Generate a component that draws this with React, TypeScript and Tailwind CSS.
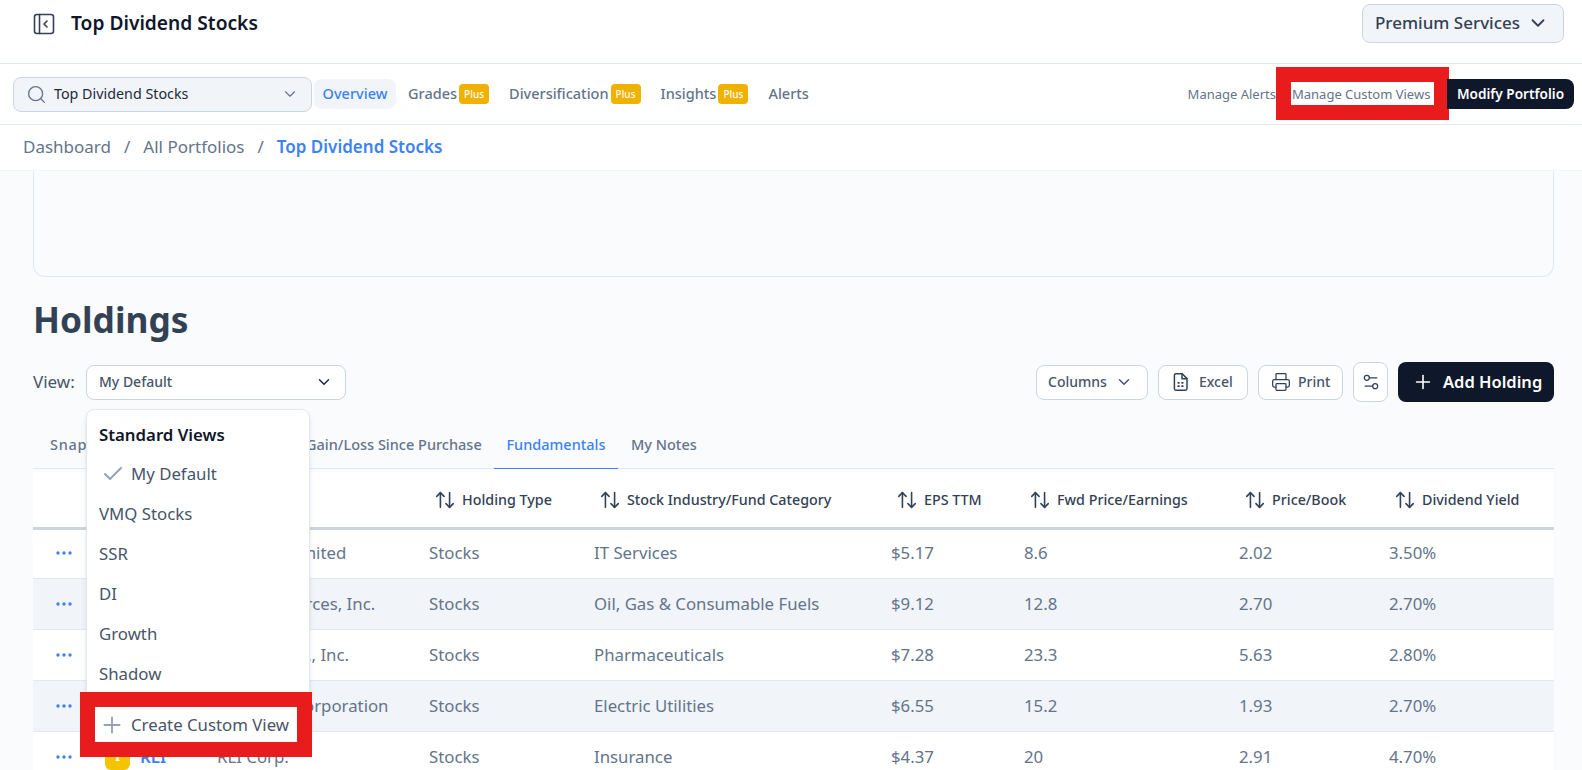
import React from 'react';
import { ArrowUpDown, Check, ChevronDown, Plus, Printer, Search, Settings2 } from 'lucide-react';

const rows = [
  { name: 'Genpact Limited', type: 'Stocks', industry: 'IT Services', eps: '$5.17', pe: '8.6', pb: '2.02', yld: '3.50%' },
  { name: 'Arch Resources, Inc.', type: 'Stocks', industry: 'Oil, Gas & Consumable Fuels', eps: '$9.12', pe: '12.8', pb: '2.70', yld: '2.70%' },
  { name: 'Merck & Co., Inc.', type: 'Stocks', industry: 'Pharmaceuticals', eps: '$7.28', pe: '23.3', pb: '5.63', yld: '2.80%' },
  { name: 'Otter Tail Corporation', type: 'Stocks', industry: 'Electric Utilities', eps: '$6.55', pe: '15.2', pb: '1.93', yld: '2.70%' },
  { name: 'RLI Corp.', ticker: 'RLI', type: 'Stocks', industry: 'Insurance', eps: '$4.37', pe: '20', pb: '2.91', yld: '4.70%' },
];

const columns = ['Holding Type', 'Stock Industry/Fund Category', 'EPS TTM', 'Fwd Price/Earnings', 'Price/Book', 'Dividend Yield'];

const gridCols = 'grid grid-cols-[384px_165px_297px_133px_215px_150px_1fr]';

const PlusBadge = () => (
  <span className="ml-[2px] flex h-[20px] w-[30px] items-center justify-center rounded-[4px] bg-[#f0b100] text-[10px] font-medium text-white">
    Plus
  </span>
);

const SidebarIcon = () => (
  <svg width="22" height="22" viewBox="0 0 22 22" fill="none" stroke="#334155" strokeWidth="1.6" strokeLinecap="round" strokeLinejoin="round">
    <rect x="1.5" y="1.5" width="19" height="19" rx="2.5" />
    <path d="M6.5 1.5v19" />
    <path d="M14 8l-3 3 3 3" />
  </svg>
);

const ExcelIcon = () => (
  <svg width="20" height="20" viewBox="0 0 20 20" fill="none" stroke="#334155" strokeWidth="1.5" strokeLinecap="round" strokeLinejoin="round">
    <path d="M5 1.8h6.2L16 6.6v10a1.6 1.6 0 0 1-1.6 1.6H5a1.6 1.6 0 0 1-1.6-1.6V3.4A1.6 1.6 0 0 1 5 1.8z" />
    <path d="M11 2v4.8h5" />
    <path d="M7.2 10.8h.8M11 10.8h.8M7.2 14.2h.8M11 14.2h.8" strokeWidth="1.7" />
  </svg>
);

const Dots = () => (
  <svg width="16" height="4" viewBox="0 0 16 4" fill="#3b82f6">
    <circle cx="2" cy="2" r="1.7" />
    <circle cx="8" cy="2" r="1.7" />
    <circle cx="14" cy="2" r="1.7" />
  </svg>
);

const ToolButton = ({ children, className }: { children: React.ReactNode; className: string }) => (
  <button className={`flex h-[35px] items-center rounded-lg border border-[#cbd5e1] bg-white text-sm font-medium text-[#475569] ${className}`}>
    {children}
  </button>
);

export default function App() {
  return (
    <div className="h-[770px] overflow-hidden bg-[#f9fbfd] font-['Noto_Sans',sans-serif]">
      {/* Top header */}
      <header className="flex h-[64px] items-start justify-between border-b border-[#e2e8f0] bg-white pl-[33px] pr-[18px] pt-[4px]">
        <div className="flex h-[39px] items-center gap-[16px]">
          <SidebarIcon />
          <h1 className="text-[19.2px] font-semibold text-[#0f172a]">Top Dividend Stocks</h1>
        </div>
        <button className="flex h-[39px] w-[202px] items-center justify-between rounded-lg border border-[#cbd5e1] bg-[#f1f5f9] pb-[2px] pl-[12px] pr-[14px] text-[17px] font-medium text-[#334155]">
          Premium Services
          <ChevronDown size={22} strokeWidth={2} />
        </button>
      </header>

      {/* Portfolio nav */}
      <nav className="flex h-[61px] items-center border-b border-[#e2e8f0] bg-white pl-[13px] pr-[8px] text-[14.5px] font-medium text-[#64748b]">
        <div className="flex h-[35px] w-[299px] items-center rounded-lg border border-[#cbd5e1] bg-[#f1f5f9] pl-[12px] pr-[12px] text-[14.3px] font-normal text-[#1e293b]">
          <Search size={21} strokeWidth={1.5} className="text-[#64748b]" />
          <span className="ml-[7px] flex-1">Top Dividend Stocks</span>
          <ChevronDown size={18} strokeWidth={1.5} className="text-[#64748b]" />
        </div>
        <a className="ml-[2px] flex h-[30px] w-[82px] items-center justify-center rounded-lg bg-[#f1f5f9] text-[#3b82f6]">Overview</a>
        <a className="ml-[12px] flex items-center">Grades<PlusBadge /></a>
        <a className="ml-[20px] flex items-center">Diversification<PlusBadge /></a>
        <a className="ml-[20px] flex items-center">Insights<PlusBadge /></a>
        <a className="ml-[20px]">Alerts</a>
        <div className="ml-auto flex items-center">
          <span className="pt-[2px] text-[13px] font-normal text-[#64748b]">Manage Alerts</span>
          <span className="mb-[1px] ml-[15px] flex h-[23px] w-[143px] items-center bg-white pl-[1px] pt-[2px] text-[13px] font-normal text-[#64748b] outline-[15px] outline-solid outline-[#e81c1c]">
            Manage Custom Views
          </span>
          <button className="ml-[13px] flex h-[30px] w-[127px] items-center justify-center rounded-r-lg bg-[#0f172a] text-[13.6px] font-semibold text-white">
            Modify Portfolio
          </button>
        </div>
      </nav>

      {/* Breadcrumb */}
      <div className="flex h-[46px] items-center gap-[13px] border-b border-[#f1f5f9] bg-white pb-[2px] pl-[23px] text-[17px] text-[#64748b]">
        <span>Dashboard</span>
        <span>/</span>
        <span>All Portfolios</span>
        <span>/</span>
        <span className="font-semibold text-[#3b82f6]">Top Dividend Stocks</span>
      </div>

      <main className="pl-[33px] pr-[28px]">
        <div className="h-[106px] rounded-b-xl border border-t-0 border-[#e2e8f0]" />

        <h2 className="mt-[22px] text-[35.3px] leading-10 font-bold text-[#334155]">Holdings</h2>

        {/* Toolbar */}
        <div className="mt-[23px] flex h-[40px] items-center">
          <span className="w-[53px] text-[17px] text-[#475569]">View:</span>
          <div className="relative">
            <button className="flex h-[35px] w-[260px] items-center justify-between rounded-lg border border-[#cbd5e1] bg-white pl-[12px] pr-[12px] text-sm font-medium text-[#475569]">
              My Default
              <ChevronDown size={18} strokeWidth={2} className="text-[#1e293b]" />
            </button>

            {/* Open view menu */}
            <div className="absolute left-0 top-[44px] z-10 w-[224px] rounded-lg border border-[#e2e8f0] bg-white pb-[3px] pt-[6px] text-[16.8px] text-[#475569] shadow-md">
              <div className="flex h-[38px] items-center pl-[12px] font-semibold text-[#0f172a]">Standard Views</div>
              <div className="flex h-10 items-center pl-[14px]">
                <Check size={24} strokeWidth={2} className="text-[#94a3b8]" />
                <span className="ml-[6px]">My Default</span>
              </div>
              <div className="flex h-10 items-center pl-[12px]">VMQ Stocks</div>
              <div className="flex h-10 items-center pl-[12px]">SSR</div>
              <div className="flex h-10 items-center pl-[12px]">DI</div>
              <div className="flex h-10 items-center pl-[12px]">Growth</div>
              <div className="flex h-10 items-center pl-[12px]">Shadow</div>
              <div className="ml-[8px] mt-[13px] flex h-[35px] w-[202px] items-center bg-white pl-[4px] pt-[2px] outline-[15px] outline-solid outline-[#e81c1c]">
                <Plus size={26} strokeWidth={1.75} className="text-[#94a3b8]" />
                <span className="ml-[6px]">Create Custom View</span>
              </div>
            </div>
          </div>

          <div className="ml-auto flex items-center">
            <ToolButton className="w-[112px] justify-between pl-[11px] pr-[14px]">
              Columns
              <ChevronDown size={18} strokeWidth={2} />
            </ToolButton>
            <ToolButton className="ml-[10px] w-[90px] gap-[8px] pl-[12px]">
              <ExcelIcon />
              Excel
            </ToolButton>
            <ToolButton className="ml-[10px] w-[85px] gap-[7px] pl-[12px]">
              <Printer size={20} strokeWidth={1.5} className="text-[#334155]" />
              Print
            </ToolButton>
            <button className="ml-[10px] flex h-[40px] w-[35px] items-center justify-center rounded-lg border border-[#cbd5e1] bg-white">
              <Settings2 size={20} strokeWidth={1.5} className="text-[#334155]" />
            </button>
            <button className="ml-[10px] flex h-[40px] w-[156px] items-center rounded-lg bg-[#0f172a] pl-[14px] text-[16.5px] font-semibold text-white">
              <Plus size={22} strokeWidth={1.75} />
              <span className="ml-[9px]">Add Holding</span>
            </button>
          </div>
        </div>

        {/* Tabs */}
        <div className="mt-[21px] flex h-[46px] items-stretch border-b border-[#e2e8f0] pb-[1px] text-[14.5px] font-medium text-[#64748b]">
          <span className="ml-[17px] flex w-[256px] items-center tracking-[0.05em]">Snapshot</span>
          <span className="flex w-[188px] items-center">Gain/Loss Since Purchase</span>
          <span className="-mb-[2px] flex w-[124px] items-center justify-center border-b border-[#3b82f6] pb-[2px] text-[#3b82f6]">Fundamentals</span>
          <span className="ml-[13px] flex items-center">My Notes</span>
        </div>

        {/* Holdings table */}
        <div className="mt-[3px] bg-white text-[16.8px] text-[#64748b]">
          <div className={`${gridCols} h-[58px] items-center border-b-[3px] border-[#cbd5e1] text-[14.3px] font-medium text-[#334155]`}>
            <div />
            {columns.map(col => (
              <div key={col} className="flex items-center gap-[6px] pl-[17px]">
                <ArrowUpDown size={22} strokeWidth={1.75} />
                {col}
              </div>
            ))}
          </div>
          {rows.map((row, i) => (
            <div
              key={row.name}
              className={`${gridCols} items-center border-b border-[#e2e8f0] ${i === 0 ? 'h-[49px] pb-[2px]' : 'h-[51px]'} ${i % 2 === 1 ? 'bg-[#f1f5f9]' : ''}`}
            >
              <div className="flex items-center pl-[23px]">
                <Dots />
                <span className="ml-[33px] flex h-[26px] w-[25px] items-center justify-center">
                  {row.ticker && (
                    <span className="flex h-[26px] w-[25px] items-center justify-center rounded-md bg-[#f5c400] text-xs font-bold leading-none text-white">I</span>
                  )}
                </span>
                <span className="ml-[10px] w-[77px] font-semibold text-[#3b82f6]">{row.ticker}</span>
                <span>{row.name}</span>
              </div>
              <div className="pl-3">{row.type}</div>
              <div className="pl-3">{row.industry}</div>
              <div className="pl-3">{row.eps}</div>
              <div className="pl-3">{row.pe}</div>
              <div className="pl-3">{row.pb}</div>
              <div className="pl-3">{row.yld}</div>
            </div>
          ))}
        </div>
      </main>
    </div>
  );
}
